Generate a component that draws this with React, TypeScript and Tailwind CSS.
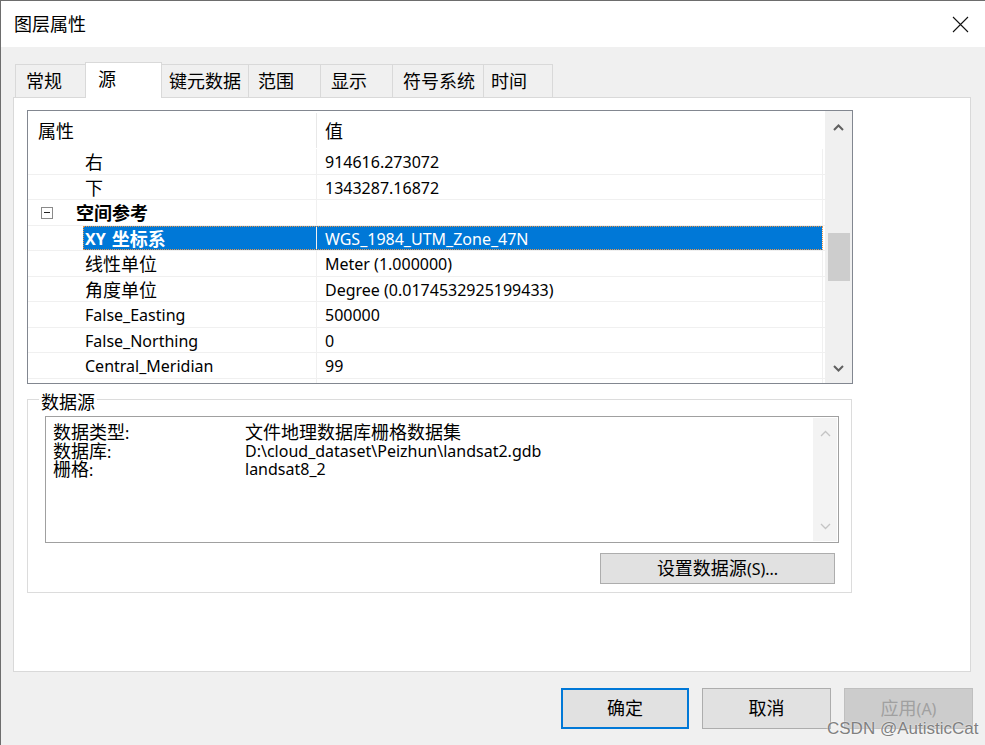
import { ReactNode } from "react";

const Zh = ({ children }: { children: ReactNode }) => (
  <span className="text-[18px]">{children}</span>
);

const Chevron = ({ up, light }: { up?: boolean; light?: boolean }) => (
  <svg width="11" height="7" viewBox="0 0 11 7" className="block">
    <polyline
      points={up ? "1,6 5.5,1.5 10,6" : "1,1 5.5,5.5 10,1"}
      fill="none"
      stroke={light ? "#c4c4c4" : "#606060"}
      strokeWidth={light ? 1.3 : 2}
    />
  </svg>
);

const tabs = [
  { name: "常规", w: "w-[71px]", pl: "pl-[10px]" },
  { name: "源", w: "w-[77px]", pl: "pl-[12px]", active: true },
  { name: "键元数据", w: "w-[88px]", pl: "pl-[7px]" },
  { name: "范围", w: "w-[73px]", pl: "pl-[9px]" },
  { name: "显示", w: "w-[73px]", pl: "pl-[10px]" },
  { name: "符号系统", w: "w-[92px]", pl: "pl-[10px]" },
  { name: "时间", w: "w-[70px]", pl: "pl-[7px]" },
];

type Row = {
  label: ReactNode;
  value: string;
  category?: boolean;
  selected?: boolean;
};

const rows: Row[] = [
  { label: <Zh>右</Zh>, value: "914616.273072" },
  { label: <Zh>下</Zh>, value: "1343287.16872" },
  { label: <Zh>空间参考</Zh>, value: "", category: true },
  {
    label: (
      <>
        {"XY"}
        <span className="ml-[6px] text-[18px]">坐标系</span>
      </>
    ),
    value: "WGS_1984_UTM_Zone_47N",
    selected: true,
  },
  { label: <Zh>线性单位</Zh>, value: "Meter (1.000000)" },
  { label: <Zh>角度单位</Zh>, value: "Degree (0.0174532925199433)" },
  { label: "False_Easting", value: "500000" },
  { label: "False_Northing", value: "0" },
  { label: "Central_Meridian", value: "99" },
  { label: "", value: "" },
];

const sourceInfo = [
  { k: "数据类型", v: <Zh>文件地理数据库栅格数据集</Zh> },
  { k: "数据库", v: "D:\\cloud_dataset\\Peizhun\\landsat2.gdb" },
  { k: "栅格", v: "landsat8_2" },
];

const PropertyGrid = () => (
  <div className="w-[826px] h-[274px] border border-[#828790] flex bg-white">
    <div className="flex-1 flex flex-col overflow-hidden">
      <div className="h-[38px] shrink-0 flex">
        <div className="w-[288px] pl-[10px] pt-[2px] flex items-center">
          <Zh>属性</Zh>
        </div>
        <div className="w-px h-[35px] mt-[2px] bg-[#e8e8e8]" />
        <div className="pl-[8px] pt-[2px] flex items-center">
          <Zh>值</Zh>
        </div>
      </div>
      {rows.map((r, i) => (
        <div key={i} className="h-[25.5px] shrink-0 flex border-b border-[#f0f0f0] leading-none">
          {r.category ? (
            <>
              <div className="w-[48px] flex items-center pl-[13px] pt-[1px]">
                <div className="w-[12px] h-[12px] border border-[#8a8a8a] flex items-center justify-center">
                  <div className="w-[6px] h-px bg-[#222]" />
                </div>
              </div>
              <div className="w-[241px] border-r border-[#f0f0f0] flex items-center pt-[2px] font-bold">
                {r.label}
              </div>
              <div className="w-[506px] border-r border-[#f0f0f0]" />
            </>
          ) : (
            <>
              <div className="w-[55px]" />
              <div
                className={`flex ${
                  r.selected
                    ? "bg-[#0078d7] text-white outline-1 outline-dotted outline-[#e8964a] -outline-offset-1"
                    : ""
                }`}
              >
                <div
                  className={`w-[234px] border-r border-[#f0f0f0] flex items-center pl-[2px] pt-[2px] ${
                    r.selected ? "font-bold" : ""
                  }`}
                >
                  {r.label}
                </div>
                <div className="w-[506px] border-r border-[#f0f0f0] flex items-center pl-[8px] pt-[2px]">
                  {r.value}
                </div>
              </div>
            </>
          )}
        </div>
      ))}
    </div>
    <div className="w-[27px] bg-[#f0f0f0] flex flex-col items-center">
      <div className="h-[32px] flex items-center justify-center">
        <Chevron up />
      </div>
      <div className="mt-[90px] w-[22px] h-[48px] bg-[#cdcdcd]" />
      <div className="mt-auto h-[30px] flex items-center justify-center">
        <Chevron />
      </div>
    </div>
  </div>
);

const SourceGroup = () => (
  <div className="relative mt-[15px] w-[825px] h-[194px] border border-[#dcdcdc]">
    <div className="absolute left-[11px] -top-[9px] px-[2px] bg-white leading-[22px]">
      <Zh>数据源</Zh>
    </div>
    <div className="mt-[16px] ml-[17px] w-[794px] h-[127px] border border-[#a0a0a0] flex">
      <div className="flex-1 pl-[7px] pt-[6px]">
        {sourceInfo.map((s) => (
          <div key={s.k} className="flex leading-[18.5px] h-[18.5px]">
            <div className="w-[192px]">
              <Zh>{s.k}</Zh>:
            </div>
            <div>{s.v}</div>
          </div>
        ))}
      </div>
      <div className="w-[24px] my-px mr-px bg-[#f3f3f3] flex flex-col items-center">
        <div className="h-[30px] flex items-center">
          <Chevron up light />
        </div>
        <div className="mt-auto h-[30px] flex items-center">
          <Chevron light />
        </div>
      </div>
    </div>
    <div className="mt-[10px] ml-[572px] w-[235px] h-[31px] bg-[#e1e1e1] border border-[#adadad] flex items-center justify-center">
      <Zh>设置数据源</Zh>(S)...
    </div>
  </div>
);

export default function App() {
  return (
    <div className="relative w-[985px] h-[745px] overflow-hidden bg-[#f0f0f0] border-l border-t border-[#6d6d6d] font-['Noto_Sans','Noto_Sans_CJK_SC',sans-serif] text-[16px] text-black">
      <div className="h-[46px] bg-white flex items-center justify-between pl-[13px] pr-[16px]">
        <Zh>图层属性</Zh>
        <svg width="17" height="17" viewBox="0 0 17 17">
          <path d="M1 1L16 16M16 1L1 16" stroke="#111" strokeWidth="1.1" />
        </svg>
      </div>

      <div className="pl-[12px] pr-[14px] pt-[15px]">
        <div className="flex items-end h-[35px] pl-[2px]">
          {tabs.map((t, i) => (
            <div
              key={t.name}
              className={`${t.w} ${t.pl} ${i > 0 ? "-ml-px" : ""} flex items-center border-t border-l border-r border-[#d9d9d9] ${
                t.active ? "relative z-10 h-[36px] -mb-px bg-white pb-[3px]" : "h-[33px] bg-[#f0f0f0]"
              }`}
            >
              <Zh>{t.name}</Zh>
            </div>
          ))}
        </div>
        <div className="h-[575px] bg-white border border-[#d9d9d9] pt-[12px] pl-[13px]">
          <PropertyGrid />
          <SourceGroup />
        </div>
      </div>

      <div className="mt-[16px] pr-[12px] flex justify-end gap-[13px]">
        <div className="w-[128px] h-[41px] bg-[#e1e1e1] border-2 border-[#0078d7] flex items-center justify-center">
          <Zh>确定</Zh>
        </div>
        <div className="w-[129px] h-[41px] bg-[#e1e1e1] border border-[#adadad] flex items-center justify-center">
          <Zh>取消</Zh>
        </div>
        <div className="w-[129px] h-[41px] bg-[#cccccc] border border-[#bfbfbf] text-[#a0a0a0] flex items-center justify-center">
          <Zh>应用</Zh>(A)
        </div>
      </div>

      <div className="absolute left-[826px] top-[715px] font-['Liberation_Sans',sans-serif] text-[17px] text-[#808080] [text-shadow:0_0_2px_#fff]">
        CSDN @AutisticCat
      </div>
    </div>
  );
}
